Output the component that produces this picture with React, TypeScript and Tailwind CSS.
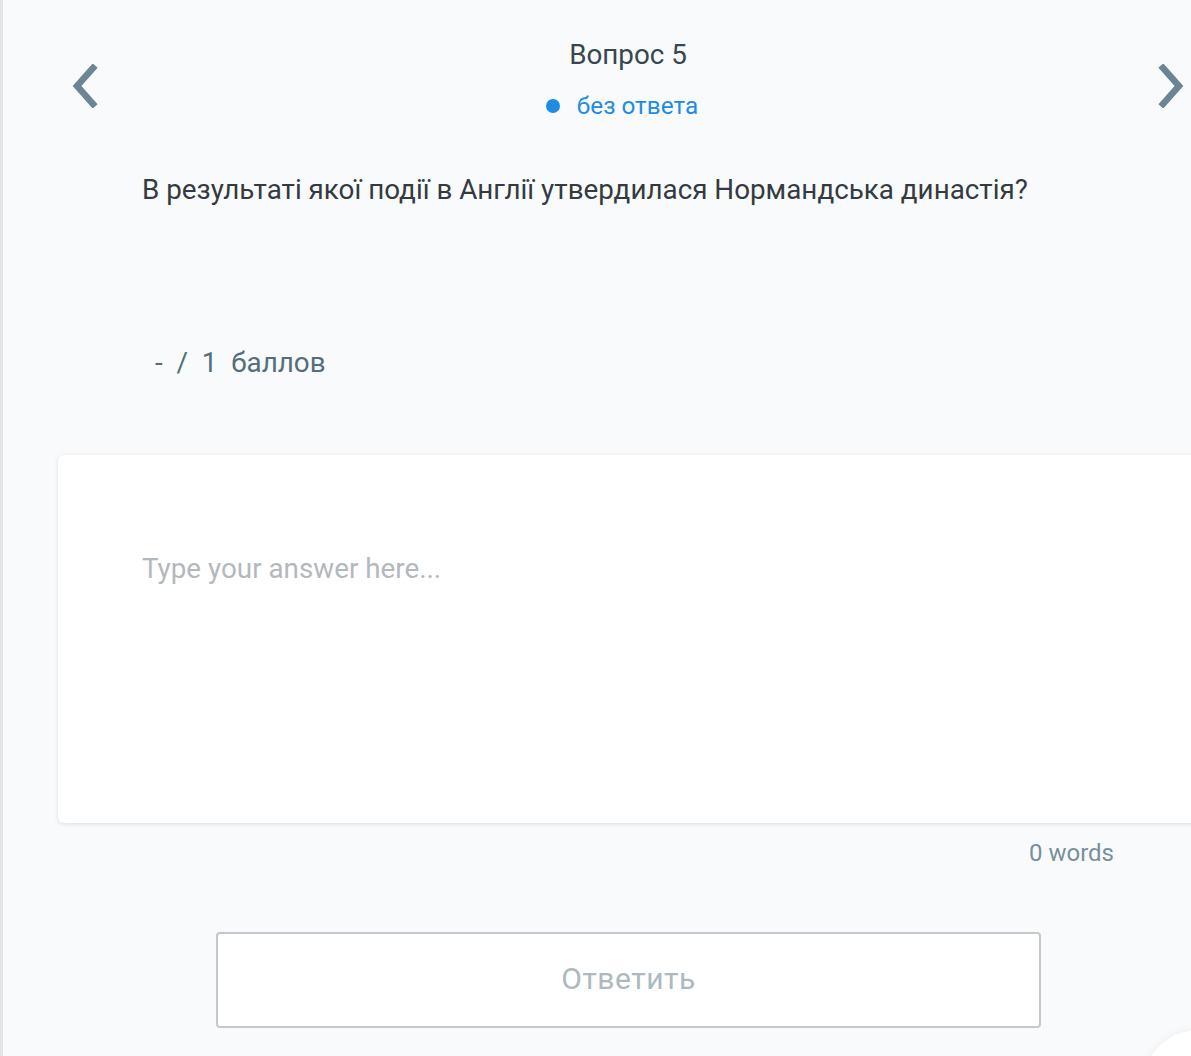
import React from "react";

function Chevron({ dir }: { dir: "left" | "right" }) {
  return (
    <svg width="30" height="44" viewBox="0 0 30 44" fill="none">
      {dir === "left" ? (
        <path d="M23 4 L7 22 L23 40" stroke="#6b8594" strokeWidth="6.5" strokeLinecap="square" strokeLinejoin="miter" />
      ) : (
        <path d="M7 4 L23 22 L7 40" stroke="#6b8594" strokeWidth="6.5" strokeLinecap="square" strokeLinejoin="miter" />
      )}
    </svg>
  );
}

export default function App() {
  return (
    <div
      className="relative w-[1191px] h-[1056px] overflow-hidden bg-[#f8fafc] border-l-[3px] border-[#e1e5ea]"
      style={{ fontFamily: "Roboto, 'Noto Sans', sans-serif" }}
    >
      {/* header */}
      <div className="flex items-start justify-between pl-[67px] pr-[5px] pt-[36px]">
        <div className="mt-[28px]">
          <Chevron dir="left" />
        </div>
        <div className="flex flex-col items-center">
          <div className="text-[27.8px] leading-[38px] text-[#37474f]">Вопрос 5</div>
          <div className="flex items-center gap-[17px] mt-[16px] mr-[12px]">
            <span className="w-[14px] h-[14px] rounded-full bg-[#1e8ce3]" />
            <span className="text-[24.3px] leading-[32px] text-[#1e8ce3]">без ответа</span>
          </div>
        </div>
        <div className="mt-[28px]">
          <Chevron dir="right" />
        </div>
      </div>

      {/* question */}
      <div className="pl-[139px] mt-[49px] text-[27.8px] leading-[38px] text-[#343a3f]">
        В результаті якої події в Англії утвердилася Нормандська династія?
      </div>

      {/* points */}
      <div className="pl-[152px] mt-[135px] text-[27.8px] leading-[38px] text-[#546e7a] whitespace-pre">
        {"-  /  1  баллов"}
      </div>

      {/* answer card */}
      <div className="ml-[55px] mr-[-30px] mt-[73px] h-[368px] bg-white rounded-[6px] shadow-[0_1px_4px_rgba(0,0,0,0.12)] pl-[84px] pt-[95px]">
        <div className="text-[27.8px] leading-[38px] text-[#b3b8bd]">Type your answer here...</div>
      </div>

      {/* word count */}
      <div className="flex justify-end pr-[77px] mt-[13px]">
        <span className="text-[24px] leading-[34px] text-[#78909c]">0 words</span>
      </div>

      {/* button */}
      <div className="ml-[213px] mt-[62px] w-[825px] h-[96px] border-2 border-[#c4c8cc] rounded-[4px] bg-white flex items-center justify-center">
        <span className="text-[30px] leading-[36px] mb-[3px] text-[#adb8bf] tracking-[0.5px]">Ответить</span>
      </div>

      {/* floating corner element */}
      <div className="absolute left-[1140px] top-[1030px] w-[110px] h-[110px] rounded-full bg-white shadow-[0_0_8px_rgba(0,0,0,0.06)]" />
    </div>
  );
}
